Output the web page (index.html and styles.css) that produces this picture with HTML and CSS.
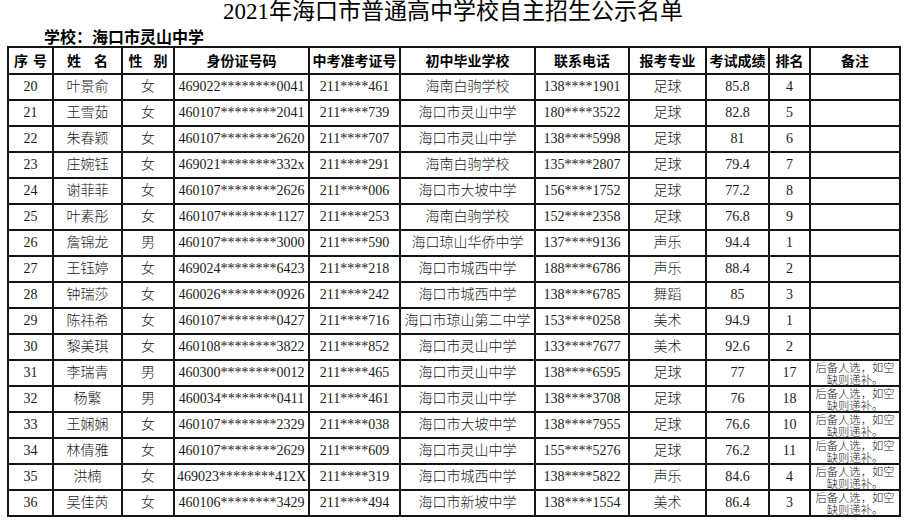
FILE: index.html
```html
<!DOCTYPE html>
<html lang="zh-CN">
<head>
<meta charset="utf-8">
<title>2021年海口市普通高中学校自主招生公示名单</title>
<link rel="stylesheet" href="styles.css">
</head>
<body>
<h1 class="title">2021年海口市普通高中学校自主招生公示名单</h1>
<div class="school">学校：海口市灵山中学</div>
<table class="list">
<colgroup>
<col class="c1"><col class="c2"><col class="c3"><col class="c4"><col class="c5"><col class="c6"><col class="c7"><col class="c8"><col class="c9"><col class="c10"><col class="c11">
</colgroup>
<thead>
<tr>
<th>序<i class="g5"></i>号</th><th>姓<i class="g13"></i>名</th><th>性<i class="g11"></i>别</th><th>身份证号码</th><th>中考准考证号</th><th>初中毕业学校</th><th>联系电话</th><th>报考专业</th><th>考试成绩</th><th>排名</th><th>备注</th>
</tr>
</thead>
<tbody>
<tr><td>20</td><td>叶景俞</td><td>女</td><td>469022********0041</td><td>211****461</td><td>海南白驹学校</td><td>138****1901</td><td>足球</td><td>85.8</td><td>4</td><td></td></tr>
<tr><td>21</td><td>王雪茹</td><td>女</td><td>460107********2041</td><td>211****739</td><td>海口市灵山中学</td><td>180****3522</td><td>足球</td><td>82.8</td><td>5</td><td></td></tr>
<tr><td>22</td><td>朱春颖</td><td>女</td><td>460107********2620</td><td>211****707</td><td>海口市灵山中学</td><td>138****5998</td><td>足球</td><td>81</td><td>6</td><td></td></tr>
<tr><td>23</td><td>庄婉钰</td><td>女</td><td>469021********332x</td><td>211****291</td><td>海南白驹学校</td><td>135****2807</td><td>足球</td><td>79.4</td><td>7</td><td></td></tr>
<tr><td>24</td><td>谢菲菲</td><td>女</td><td>460107********2626</td><td>211****006</td><td>海口市大坡中学</td><td>156****1752</td><td>足球</td><td>77.2</td><td>8</td><td></td></tr>
<tr><td>25</td><td>叶素彤</td><td>女</td><td>460107********1127</td><td>211****253</td><td>海南白驹学校</td><td>152****2358</td><td>足球</td><td>76.8</td><td>9</td><td></td></tr>
<tr><td>26</td><td>詹锦龙</td><td>男</td><td>460107********3000</td><td>211****590</td><td>海口琼山华侨中学</td><td>137****9136</td><td>声乐</td><td>94.4</td><td>1</td><td></td></tr>
<tr><td>27</td><td>王钰婷</td><td>女</td><td>469024********6423</td><td>211****218</td><td>海口市城西中学</td><td>188****6786</td><td>声乐</td><td>88.4</td><td>2</td><td></td></tr>
<tr><td>28</td><td>钟瑞莎</td><td>女</td><td>460026********0926</td><td>211****242</td><td>海口市城西中学</td><td>138****6785</td><td>舞蹈</td><td>85</td><td>3</td><td></td></tr>
<tr><td>29</td><td>陈祎希</td><td>女</td><td>460107********0427</td><td>211****716</td><td>海口市琼山第二中学</td><td>153****0258</td><td>美术</td><td>94.9</td><td>1</td><td></td></tr>
<tr><td>30</td><td>黎美琪</td><td>女</td><td>460108********3822</td><td>211****852</td><td>海口市灵山中学</td><td>133****7677</td><td>美术</td><td>92.6</td><td>2</td><td></td></tr>
<tr><td>31</td><td>李瑞青</td><td>男</td><td>460300********0012</td><td>211****465</td><td>海口市灵山中学</td><td>138****6595</td><td>足球</td><td>77</td><td>17</td><td class="note">后备人选，如空<br>缺则递补。</td></tr>
<tr><td>32</td><td>杨繁</td><td>男</td><td>460034********0411</td><td>211****461</td><td>海口市灵山中学</td><td>138****3708</td><td>足球</td><td>76</td><td>18</td><td class="note">后备人选，如空<br>缺则递补。</td></tr>
<tr><td>33</td><td>王娴娴</td><td>女</td><td>460107********2329</td><td>211****038</td><td>海口市大坡中学</td><td>138****7955</td><td>足球</td><td>76.6</td><td>10</td><td class="note">后备人选，如空<br>缺则递补。</td></tr>
<tr><td>34</td><td>林倩雅</td><td>女</td><td>460107********2629</td><td>211****609</td><td>海口市灵山中学</td><td>155****5276</td><td>足球</td><td>76.2</td><td>11</td><td class="note">后备人选，如空<br>缺则递补。</td></tr>
<tr><td>35</td><td>洪楠</td><td>女</td><td>469023********412X</td><td>211****319</td><td>海口市城西中学</td><td>138****5822</td><td>声乐</td><td>84.6</td><td>4</td><td class="note">后备人选，如空<br>缺则递补。</td></tr>
<tr><td>36</td><td>吴佳芮</td><td>女</td><td>460106********3429</td><td>211****494</td><td>海口市新坡中学</td><td>138****1554</td><td>美术</td><td>86.4</td><td>3</td><td class="note">后备人选，如空<br>缺则递补。</td></tr>
</tbody>
</table>
</body>
</html>
```
FILE: styles.css
```css
html, body {
  margin: 0;
  padding: 0;
  background: #fff;
  color: #111;
}

.title {
  margin: 0;
  height: 24px;
  font-family: "Liberation Serif", "Noto Sans CJK SC", serif;
  font-weight: 400;
  font-size: 23px;
  line-height: 24px;
  text-align: center;
  color: #000;
}

.school {
  padding: 6px 0 0 44px;
  height: 16px;
  font-family: "Liberation Sans", "Noto Sans CJK SC", sans-serif;
  font-weight: 700;
  font-size: 16px;
  line-height: 16px;
  color: #000;
}

.list {
  margin-left: 7px;
  width: 892px;
  table-layout: fixed;
  border-collapse: collapse;
  border: 2px solid #000;
}

.c1 { width: 45px; }
.c2 { width: 69px; }
.c3 { width: 52px; }
.c4 { width: 135px; }
.c5 { width: 91px; }
.c6 { width: 135px; }
.c7 { width: 94px; }
.c8 { width: 77px; }
.c9 { width: 63px; }
.c10 { width: 41px; }
.c11 { width: 90px; }

.list th,
.list td {
  border: 2px solid #161616;
  padding: 0;
  text-align: center;
  vertical-align: middle;
  white-space: nowrap;
  overflow: visible;
}

.list thead tr { height: 27px; }
.list tbody tr { height: 26px; }

.list th {
  font-family: "Liberation Sans", "Noto Sans CJK SC", sans-serif;
  font-weight: 700;
  font-size: 14px;
  line-height: 16px;
  color: #000;
}

.list td {
  font-family: "Liberation Serif", "Noto Sans CJK SC", serif;
  font-weight: 300;
  font-size: 14px;
  line-height: 16px;
  color: #1a1a1a;
}

.list td.note {
  font-family: "Noto Sans CJK SC", sans-serif;
  font-size: 11.3px;
  line-height: 12px;
}

.g5, .g11, .g13 { display: inline-block; }
.g5 { width: 5px; }
.g11 { width: 11px; }
.g13 { width: 13px; }
```
